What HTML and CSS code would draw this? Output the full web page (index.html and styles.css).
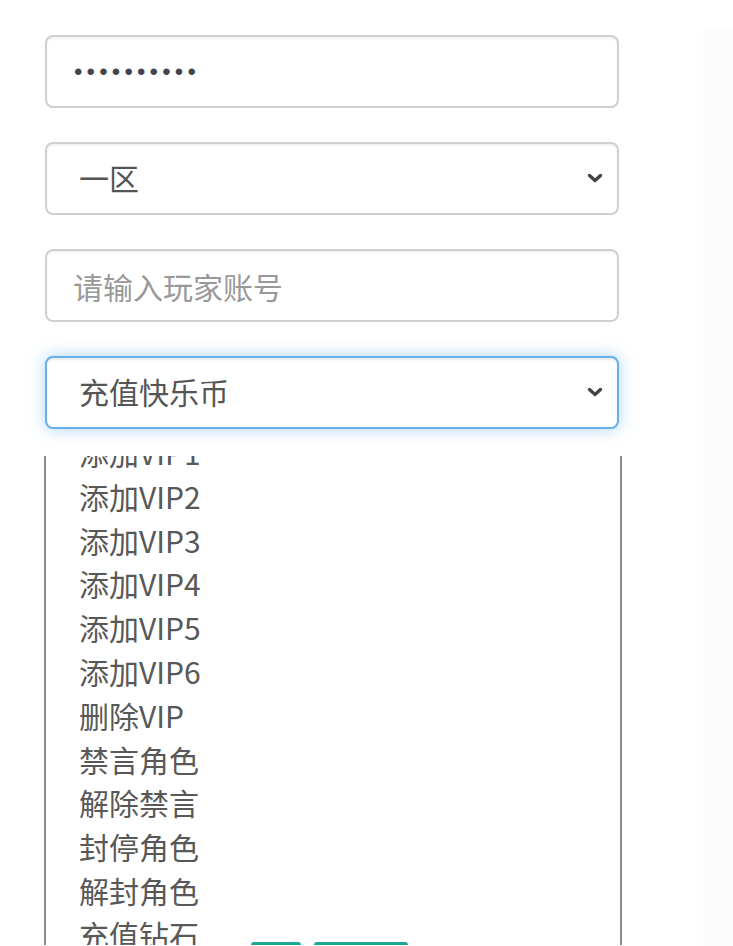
FILE: index.html
```html
<!DOCTYPE html>
<html lang="zh-CN">
<head>
    <meta charset="UTF-8">
    <meta name="viewport" content="width=device-width, initial-scale=1.0">
    <title>GM</title>
    <link rel="stylesheet" href="styles.css">
</head>
<body>
    <div class="page">
        <div class="form-col">
            <form class="gm-form">
                <div class="form-group">
                    <input class="form-control pwd" type="password" value="1234567890">
                </div>

                <div class="form-group select-wrap">
                    <select class="form-control">
                        <option>一区</option>
                    </select>
                    <svg class="chevron" width="16" height="10" viewBox="0 0 16 10"><polyline points="2.5,2.5 8,7.5 13.5,2.5" fill="none" stroke="#444" stroke-width="3.4" stroke-linecap="round" stroke-linejoin="round"/></svg>
                </div>

                <div class="form-group">
                    <input class="form-control" type="text" placeholder="请输入玩家账号">
                </div>

                <div class="form-group select-wrap">
                    <select class="form-control is-focus">
                        <option>充值快乐币</option>
                    </select>
                    <svg class="chevron" width="16" height="10" viewBox="0 0 16 10"><polyline points="2.5,2.5 8,7.5 13.5,2.5" fill="none" stroke="#444" stroke-width="3.4" stroke-linecap="round" stroke-linejoin="round"/></svg>
                </div>
            </form>

            <!-- open dropdown of the last select -->
            <div class="option-list">
                <ul id="options"></ul>
                <div class="peek-btns">
                    <span class="peek-btn small"></span>
                    <span class="peek-btn wide"></span>
                </div>
            </div>
        </div>
        <div class="side"></div>
    </div>

<script>
const actions = [
    '添加VIP1', '添加VIP2', '添加VIP3', '添加VIP4', '添加VIP5', '添加VIP6',
    '删除VIP', '禁言角色', '解除禁言', '封停角色', '解封角色', '充值钻石', '充值快乐币'
];

document.getElementById('options').innerHTML = actions
    .map(name => `<li>${name}</li>`)
    .join('');
</script>
</body>
</html>
```

FILE: styles.css
```css
:root {
    --text: #555;
    --border: #cfcfcf;
    --focus: #66afe9;
}

html, body {
    margin: 0;
    height: 100%;
    overflow: hidden;
    background: #fff;
}

body {
    font-family: "Noto Sans CJK SC", "Liberation Sans", sans-serif;
    color: var(--text);
}

.page {
    display: flex;
    height: 946px;
}

.form-col {
    width: 703px;
    padding: 35px 0 0 45px;
    box-sizing: border-box;
}

.side {
    flex: 1;
    margin-top: 30px;
    background: #fcfcfc;
}

.gm-form {
    width: 574px;
}

.form-group {
    margin-bottom: 34px;
}

.form-group:last-child {
    margin-bottom: 0;
}

.form-control {
    display: block;
    width: 100%;
    height: 73px;
    box-sizing: border-box;
    padding: 0 26px;
    font-family: "Noto Sans CJK SC", "Liberation Sans", sans-serif;
    font-size: 30px;
    color: var(--text);
    background: #fff;
    border: 2px solid var(--border);
    border-radius: 8px;
    box-shadow: inset 0 2px 2px rgba(0,0,0,0.05);
    outline: none;
}

.form-control::placeholder {
    color: #999;
}

.pwd {
    font-family: "Liberation Sans", sans-serif;
    font-size: 24px;
    letter-spacing: 4.2px;
    padding-left: 27px;
    color: #44444f;
}

.select-wrap {
    position: relative;
}

.select-wrap select {
    appearance: none;
    -webkit-appearance: none;
    padding-left: 32px;
    padding-bottom: 4px;
}

.chevron {
    position: absolute;
    right: 16px;
    top: 31px;
    pointer-events: none;
}

.is-focus {
    border-color: var(--focus);
    box-shadow: inset 0 2px 2px rgba(0,0,0,0.075), 0 0 16px rgba(102,175,233,0.55);
}

.is-focus {
    padding-bottom: 0;
}

.option-list {
    position: relative;
    width: 578px;
    height: 489px;
    margin: 27px 0 0 -1px;
    box-sizing: border-box;
    border-left: 2px solid #8c8c8c;
    border-right: 2px solid #8c8c8c;
    overflow: hidden;
}

.option-list ul {
    list-style: none;
    margin: -25px 0 0;
    padding: 0 0 0 33px;
}

.option-list li {
    font-size: 30px;
    line-height: 43.8px;
    color: #585858;
}

.peek-btns {
    position: absolute;
    left: 205px;
    top: 486px;
    display: flex;
    gap: 13px;
}

.peek-btn {
    height: 10px;
    background: #1ba896;
    border-radius: 3px;
}

.peek-btn.small {
    width: 50px;
}

.peek-btn.wide {
    width: 94px;
}
```
